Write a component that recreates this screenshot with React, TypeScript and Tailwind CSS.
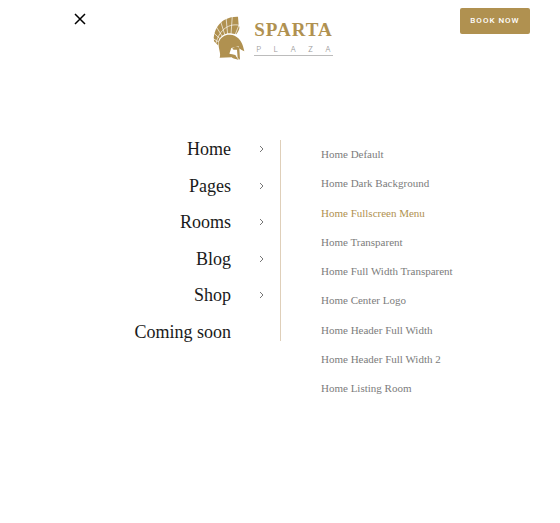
import React from "react";

const menu = [
  { label: "Home", nested: true },
  { label: "Pages", nested: true },
  { label: "Rooms", nested: true },
  { label: "Blog", nested: true },
  { label: "Shop", nested: true },
  { label: "Coming soon", nested: false },
];

const submenu = [
  "Home Default",
  "Home Dark Background",
  "Home Fullscreen Menu",
  "Home Transparent",
  "Home Full Width Transparent",
  "Home Center Logo",
  "Home Header Full Width",
  "Home Header Full Width 2",
  "Home Listing Room",
];

const current = "Home Fullscreen Menu";

function Helmet() {
  return (
    <svg viewBox="20 15 96 132" className="h-11 w-8" aria-hidden="true">
      {/* crest */}
      <path
        d="M95 17 C70 16 46 26 34 46 C25 60 20 76 23 91 L35 103 L37 88 C44 73 58 66 72 67 L90 70 C98 60 102 50 97 43 Z"
        fill="#b09150"
      />
      <g fill="none" stroke="#fff" strokeWidth="2">
        <path d="M100 43 C70 36 39 54 29 97" />
        <path d="M78 14 L74 70" />
        <path d="M59 18 L64 71" />
        <path d="M42 29 L56 73" />
        <path d="M29 46 L49 78" />
        <path d="M20 64 L43 85" />
        <path d="M17 81 L39 94" />
        <path d="M98 42 L86 72" />
      </g>
      {/* bowl and neck guard */}
      <path
        d="M37 94 C43 78 57 70 71 71 C91 72 105 87 110 106 L114 121 L106 117 L97 111 C88 108 79 112 76 123 L73 130 L91 132 L99 146 L76 139 L40 140 C45 127 35 113 37 94 Z"
        fill="#b09150"
      />
      {/* face opening and cheek guard */}
      <path d="M75 111 L97 106 L101 147 L94 145 L86 131 L69 128 Z" fill="#fff" />
      <path d="M78 113 C84 106 94 106 99 110 L101 146 L94 141 L92 116 L82 116 Z" fill="#b09150" />
      <path d="M67 128 L86 132 L96 146 L80 142 Z" fill="#b09150" />
    </svg>
  );
}

function Logo() {
  return (
    <a href="#" aria-label="Sparta Plaza" className="flex items-center gap-[9px]">
      <Helmet />
      <span className="flex flex-col">
        <span className="font-['Liberation_Serif',serif] text-[19px] leading-5 font-bold tracking-[1px] text-[#b09150]">
          SPARTA
        </span>
        <span className="mt-1 flex justify-between border-b border-[#bcbcbc] px-[2px] pb-px font-['Inter',sans-serif] text-[8px] leading-[10px] font-light text-[#999]">
          <span>P</span>
          <span>L</span>
          <span>A</span>
          <span>Z</span>
          <span>A</span>
        </span>
      </span>
    </a>
  );
}

export default function App() {
  return (
    <div className="min-h-screen bg-white">
      <header className="flex items-start justify-between pt-2 pr-[30px] pl-[74px]">
        <button type="button" aria-label="Close menu" className="mt-[5px] text-black">
          <svg viewBox="0 0 12 12" className="size-3" fill="none" stroke="currentColor" strokeWidth="1.5">
            <path d="M1 1 L11 11 M11 1 L1 11" />
          </svg>
        </button>
        <div className="mt-2">
          <Logo />
        </div>
        <button
          type="button"
          className="h-[26px] w-[70px] rounded-[2px] bg-[#b09150] font-['Roboto',sans-serif] text-[8px] leading-[26px] font-medium tracking-[1px] text-white"
        >
          BOOK NOW
        </button>
      </header>

      <main className="mt-20 grid grid-cols-2 items-start font-['Liberation_Serif',serif]">
        <nav aria-label="Main" className="-mr-px border-r border-[#dfcfb9]">
          <ul className="flex h-[201px] flex-col justify-between">
            {menu.map((item) => (
              <li key={item.label}>
                <a
                  href="#"
                  className="flex items-center justify-end pr-4 text-[18px] leading-[18px] text-[#1a1a1a]"
                >
                  {item.label}
                  <span className="ml-7 w-[5px]">
                    {item.nested && (
                      <svg
                        viewBox="0 0 5 8"
                        className="h-2 w-[5px]"
                        fill="none"
                        stroke="#777"
                        aria-hidden="true"
                      >
                        <path d="M1 1 L4 4 L1 7" />
                      </svg>
                    )}
                  </span>
                </a>
              </li>
            ))}
          </ul>
        </nav>
        <nav aria-label="Home pages" className="pt-1 pl-[41px]">
          <ul className="flex h-[254px] flex-col justify-between">
            {submenu.map((label) => (
              <li key={label} className="text-[11px] leading-5">
                <a
                  href="#"
                  aria-current={label === current ? "page" : undefined}
                  className={label === current ? "text-[#b09150]" : "text-[#7c7c7c]"}
                >
                  {label}
                </a>
              </li>
            ))}
          </ul>
        </nav>
      </main>
    </div>
  );
}
